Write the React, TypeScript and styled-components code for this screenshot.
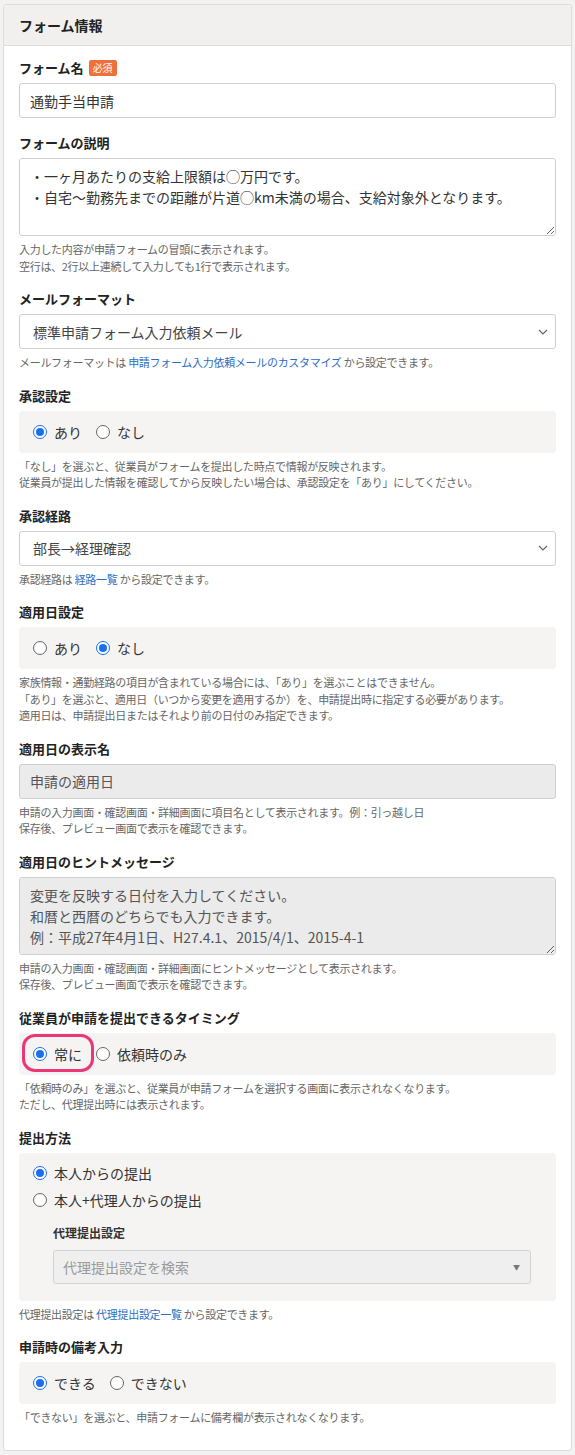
import React from 'react';
import styled, { createGlobalStyle } from 'styled-components';

const FONT = `"Noto Sans CJK JP", "Noto Sans", sans-serif`;

const GlobalStyle = createGlobalStyle`
  html, body { margin: 0; padding: 0; background: #f2f2f2; }
  body { font-family: ${FONT}; color: #333; }
  * { box-sizing: border-box; }
`;

const Page = styled.div`
  padding: 4px 3px 5px;
`;

const Panel = styled.section`
  background: #fff;
  border: 1px solid #dcdcdc;
  border-radius: 3px;
`;

const PanelHeader = styled.h2`
  margin: 0;
  height: 41px;
  display: flex;
  align-items: center;
  padding: 0 15px;
  background: #f1f0ee;
  border-bottom: 1px solid #dcdcdc;
  font-size: 14px;
  font-weight: 700;
  color: #222;
`;

const PanelBody = styled.div`
  padding: 13px 15px 24px;
  display: flex;
  flex-direction: column;
  gap: 16px;
`;

const Field = styled.div`
  display: flex;
  flex-direction: column;
`;

const Label = styled.div`
  display: flex;
  align-items: center;
  gap: 5px;
  font-size: 13px;
  font-weight: 700;
  line-height: 18px;
  color: #222;
  margin-bottom: 6px;
`;

const Badge = styled.span`
  font-size: 10px;
  font-weight: 400;
  line-height: 16px;
  color: #fff;
  background: #f0703c;
  border-radius: 2px;
  padding: 0 4px;
`;

const TextInput = styled.input<{ $muted?: boolean }>`
  width: 100%;
  height: 35px;
  padding: 0 10px;
  border: 1px solid #cfcfcf;
  border-radius: 3px;
  font-family: ${FONT};
  font-size: 14px;
  color: ${p => (p.$muted ? '#555' : '#333')};
  background: ${p => (p.$muted ? '#ebebeb' : '#fff')};
  outline: none;
`;

const TextArea = styled.textarea<{ $muted?: boolean }>`
  width: 100%;
  height: 78px;
  padding: 7px 10px;
  border: 1px solid #cfcfcf;
  border-radius: 3px;
  font-family: ${FONT};
  font-size: 14px;
  line-height: 21px;
  color: ${p => (p.$muted ? '#555' : '#333')};
  background: ${p => (p.$muted ? '#ebebeb' : '#fff')};
  resize: vertical;
  outline: none;
  display: block;
`;

const SelectBox = styled.div`
  height: 35px;
  display: flex;
  align-items: center;
  justify-content: space-between;
  padding: 0 6px 0 13px;
  border: 1px solid #cfcfcf;
  border-radius: 3px;
  background: #fff;
  font-size: 14px;
  color: #444;
`;

const SearchSelect = styled.div`
  height: 34px;
  display: flex;
  align-items: center;
  justify-content: space-between;
  padding: 0 10px 0 9px;
  border: 1px solid #d3d3d3;
  border-radius: 3px;
  background: #efefef;
  font-size: 14px;
  color: #9a9a9a;
`;

const Caret = styled.span`
  font-size: 7px;
  color: #777;
`;

const Help = styled.div`
  margin-top: 5px;
  font-size: 11px;
  line-height: 16.5px;
  color: #666;
  letter-spacing: -0.3px;
`;

const Link = styled.a`
  color: #2a6ec4;
  text-decoration: none;
`;

const RadioBox = styled.div`
  min-height: 42px;
  display: flex;
  align-items: center;
  gap: 14px;
  padding: 0 14px;
  background: #f5f4f2;
  border-radius: 4px;
`;

const StackBox = styled.div`
  background: #f5f4f2;
  border-radius: 4px;
  padding: 7px 25px 17px 14px;
  display: flex;
  flex-direction: column;
`;

const RadioRow = styled.div`
  height: 27px;
  display: flex;
  align-items: center;
`;

const SubSection = styled.div`
  margin-top: 10px;
  padding-left: 20px;
  display: flex;
  flex-direction: column;
`;

const SubLabel = styled.div`
  font-size: 12px;
  font-weight: 700;
  line-height: 18px;
  color: #333;
  margin-bottom: 8px;
`;

const RadioLabel = styled.label<{ $highlight?: boolean }>`
  position: relative;
  display: inline-flex;
  align-items: center;
  gap: 7px;
  font-size: 14px;
  line-height: 20px;
  color: #333;
  &::before {
    content: '';
    display: ${p => (p.$highlight ? 'block' : 'none')};
    position: absolute;
    left: -11px;
    right: -12px;
    top: -10px;
    bottom: -8px;
    border: 3px solid #ea3778;
    border-radius: 13px;
  }
`;

const RadioCircle = styled.span<{ $checked?: boolean }>`
  width: 14px;
  height: 14px;
  flex: none;
  border-radius: 50%;
  background: #fff;
  border: ${p => (p.$checked ? '1.5px solid #1a6ff0' : '1px solid #666')};
  display: flex;
  align-items: center;
  justify-content: center;
  &::after {
    content: '';
    width: 8px;
    height: 8px;
    border-radius: 50%;
    background: ${p => (p.$checked ? '#1a6ff0' : 'transparent')};
  }
`;

const Chevron = () => (
  <svg width="12" height="8" viewBox="0 0 12 8" aria-hidden="true">
    <polyline points="2,2 6,6 10,2" fill="none" stroke="#666" strokeWidth="1.2" />
  </svg>
);

const Radio = ({ label, checked, highlight }: { label: string; checked?: boolean; highlight?: boolean }) => (
  <RadioLabel $highlight={highlight}>
    <RadioCircle $checked={checked} />
    {label}
  </RadioLabel>
);

const HelpLines = ({ lines }: { lines: React.ReactNode[] }) => (
  <Help>
    {lines.map((l, i) => (
      <div key={i}>{l}</div>
    ))}
  </Help>
);

export default function App() {
  return (
    <>
      <GlobalStyle />
      <Page>
        <Panel>
          <PanelHeader>フォーム情報</PanelHeader>
          <PanelBody>
            <Field>
              <Label>
                フォーム名<Badge>必須</Badge>
              </Label>
              <TextInput readOnly value="通勤手当申請" />
            </Field>

            <Field>
              <Label>フォームの説明</Label>
              <TextArea
                readOnly
                value={'・一ヶ月あたりの支給上限額は◯万円です。\n・自宅〜勤務先までの距離が片道◯km未満の場合、支給対象外となります。'}
              />
              <HelpLines
                lines={['入力した内容が申請フォームの冒頭に表示されます。', '空行は、2行以上連続して入力しても1行で表示されます。']}
              />
            </Field>

            <Field>
              <Label>メールフォーマット</Label>
              <SelectBox>
                <span>標準申請フォーム入力依頼メール</span>
                <Chevron />
              </SelectBox>
              <HelpLines
                lines={[
                  <>
                    メールフォーマットは <Link>申請フォーム入力依頼メールのカスタマイズ</Link> から設定できます。
                  </>,
                ]}
              />
            </Field>

            <Field>
              <Label>承認設定</Label>
              <RadioBox>
                <Radio label="あり" checked />
                <Radio label="なし" />
              </RadioBox>
              <HelpLines
                lines={[
                  '「なし」を選ぶと、従業員がフォームを提出した時点で情報が反映されます。',
                  '従業員が提出した情報を確認してから反映したい場合は、承認設定を「あり」にしてください。',
                ]}
              />
            </Field>

            <Field>
              <Label>承認経路</Label>
              <SelectBox>
                <span>部長→経理確認</span>
                <Chevron />
              </SelectBox>
              <HelpLines
                lines={[
                  <>
                    承認経路は <Link>経路一覧</Link> から設定できます。
                  </>,
                ]}
              />
            </Field>

            <Field>
              <Label>適用日設定</Label>
              <RadioBox>
                <Radio label="あり" />
                <Radio label="なし" checked />
              </RadioBox>
              <HelpLines
                lines={[
                  '家族情報・通勤経路の項目が含まれている場合には、「あり」を選ぶことはできません。',
                  '「あり」を選ぶと、適用日（いつから変更を適用するか）を、申請提出時に指定する必要があります。',
                  '適用日は、申請提出日またはそれより前の日付のみ指定できます。',
                ]}
              />
            </Field>

            <Field>
              <Label>適用日の表示名</Label>
              <TextInput $muted readOnly value="申請の適用日" />
              <HelpLines
                lines={[
                  '申請の入力画面・確認画面・詳細画面に項目名として表示されます。例：引っ越し日',
                  '保存後、プレビュー画面で表示を確認できます。',
                ]}
              />
            </Field>

            <Field>
              <Label>適用日のヒントメッセージ</Label>
              <TextArea
                $muted
                readOnly
                value={'変更を反映する日付を入力してください。\n和暦と西暦のどちらでも入力できます。\n例：平成27年4月1日、H27.4.1、2015/4/1、2015-4-1'}
              />
              <HelpLines
                lines={[
                  '申請の入力画面・確認画面・詳細画面にヒントメッセージとして表示されます。',
                  '保存後、プレビュー画面で表示を確認できます。',
                ]}
              />
            </Field>

            <Field>
              <Label>従業員が申請を提出できるタイミング</Label>
              <RadioBox>
                <Radio label="常に" checked highlight />
                <Radio label="依頼時のみ" />
              </RadioBox>
              <HelpLines
                lines={[
                  '「依頼時のみ」を選ぶと、従業員が申請フォームを選択する画面に表示されなくなります。',
                  'ただし、代理提出時には表示されます。',
                ]}
              />
            </Field>

            <Field>
              <Label>提出方法</Label>
              <StackBox>
                <RadioRow>
                  <Radio label="本人からの提出" checked />
                </RadioRow>
                <RadioRow>
                  <Radio label="本人+代理人からの提出" />
                </RadioRow>
                <SubSection>
                  <SubLabel>代理提出設定</SubLabel>
                  <SearchSelect>
                    <span>代理提出設定を検索</span>
                    <Caret>▼</Caret>
                  </SearchSelect>
                </SubSection>
              </StackBox>
              <HelpLines
                lines={[
                  <>
                    代理提出設定は <Link>代理提出設定一覧</Link> から設定できます。
                  </>,
                ]}
              />
            </Field>

            <Field>
              <Label>申請時の備考入力</Label>
              <RadioBox>
                <Radio label="できる" checked />
                <Radio label="できない" />
              </RadioBox>
              <HelpLines lines={['「できない」を選ぶと、申請フォームに備考欄が表示されなくなります。']} />
            </Field>
          </PanelBody>
        </Panel>
      </Page>
    </>
  );
}
